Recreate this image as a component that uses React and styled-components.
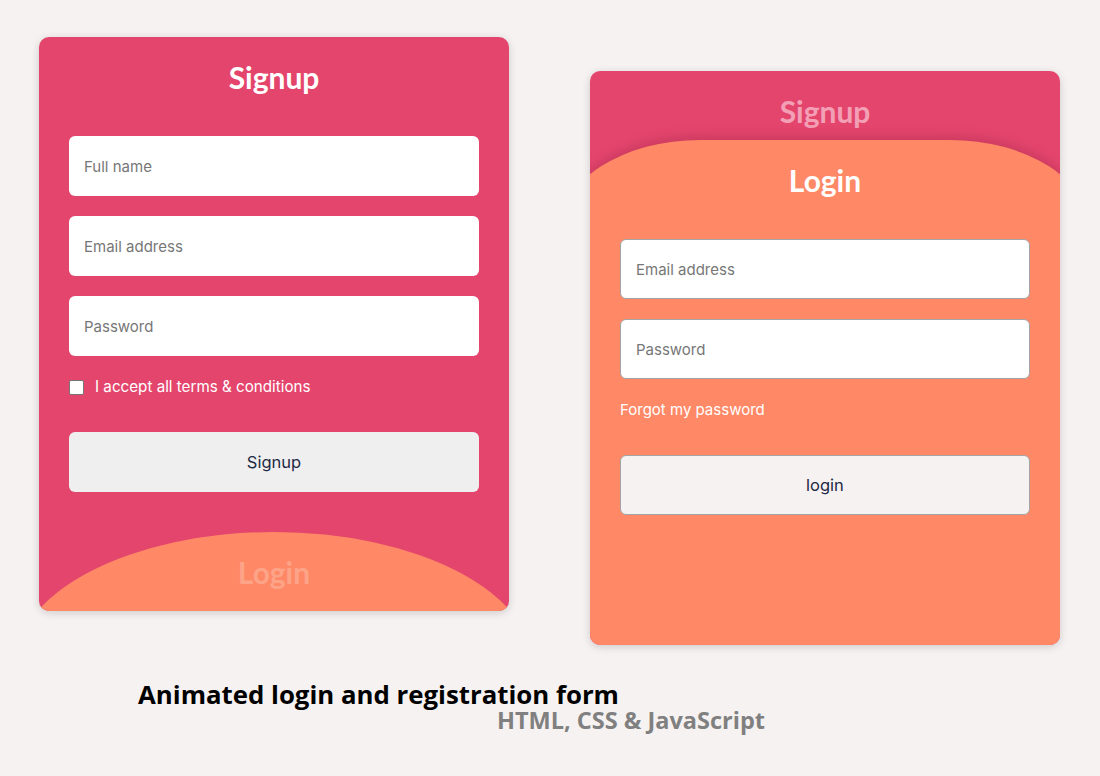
import React from "react"
import styled, { createGlobalStyle } from "styled-components"

const PINK = "#e4456d"
const ORANGE = "#ff8866"
const BODY_FONT = `Inter, "Noto Sans", sans-serif`

const GlobalStyle = createGlobalStyle`
  * { box-sizing: border-box; }
  body {
    margin: 0;
    background: #f6f2f1;
    font-family: ${BODY_FONT};
  }
`

const Page = styled.div`
  width: 1100px;
  height: 776px;
  display: flex;
  flex-direction: column;
`

const Row = styled.div`
  display: flex;
  align-items: flex-start;
  gap: 81px;
  padding: 37px 0 0 39px;
`

const Card = styled.div`
  position: relative;
  width: 470px;
  height: 574px;
  margin-top: ${p => p.$offset || 0}px;
  display: flex;
  flex-direction: column;
  background: ${PINK};
  border-radius: 10px;
  overflow: hidden;
  box-shadow: 0 2px 8px rgba(0, 0, 0, 0.16);
`

const Pane = styled.div`
  position: relative;
  display: flex;
  flex-direction: column;
  padding: 22px 30px 0;
  flex: ${p => (p.$grow ? 1 : "none")};
  height: ${p => (p.$height ? `${p.$height}px` : "auto")};
  margin-top: ${p => (p.$bottom ? "auto" : 0)};
`

const Ellipse = styled.div`
  position: absolute;
  left: 50%;
  top: 0;
  width: 520px;
  height: 270px;
  transform: translateX(-50%);
  border-radius: 50%;
  background: ${ORANGE};
`

const Hill = styled.div`
  position: absolute;
  left: -30px;
  right: -30px;
  top: 0;
  bottom: 0;
  background: ${ORANGE};
  border-radius: 140px 140px 0 0 / 90px 90px 0 0;
  box-shadow: 0 -3px 12px rgba(120, 20, 50, 0.25);
`

const Title = styled.h2`
  position: relative;
  margin: 0;
  height: 36px;
  line-height: 36px;
  text-align: center;
  font-family: Lato, "Noto Sans", sans-serif;
  font-size: 30px;
  font-weight: 700;
  color: ${p => p.$ghost || "#fff"};
`

const Fields = styled.div`
  position: relative;
  display: flex;
  flex-direction: column;
  gap: 20px;
  margin-top: 41px;
`

const Input = styled.input`
  width: 100%;
  height: 60px;
  padding: 0 15px;
  border: ${p => (p.$outlined ? "1px solid #a4a4a4" : "none")};
  border-radius: 6px;
  background: #fff;
  font-family: ${BODY_FONT};
  font-size: 15px;
  outline: none;
  &::placeholder {
    color: #777;
  }
`

const CheckRow = styled.label`
  display: flex;
  align-items: center;
  gap: 11px;
  height: 16px;
  margin-top: 23px;
  color: #fff;
  font-size: 15.2px;
  line-height: 16px;
`

const Box = styled.input`
  appearance: none;
  margin: 0;
  width: 15px;
  height: 15px;
  background: #fff;
  border: 1px solid #777;
  border-radius: 2px;
`

const Forgot = styled.div`
  position: relative;
  margin-top: 21px;
  height: 20px;
  line-height: 20px;
  color: #fff;
  font-size: 15px;
`

const Button = styled.button`
  position: relative;
  width: 100%;
  height: 60px;
  margin-top: ${p => p.$gap}px;
  border: ${p => (p.$outlined ? "1px solid #a4a4a4" : "none")};
  border-radius: 6px;
  background: ${p => (p.$outlined ? "#f6f2f1" : "#efefef")};
  color: #1e2a44;
  font-family: ${BODY_FONT};
  font-size: 16.5px;
`

const Caption = styled.div`
  margin: 36px 0 0 138px;
  font-family: "Open Sans", "Noto Sans", sans-serif;
  font-weight: 700;
`

const Heading = styled.div`
  font-size: 25.8px;
  line-height: 26px;
  color: #000;
`

const Sub = styled.div`
  padding-left: 359px;
  font-size: 23.5px;
  line-height: 26px;
  color: #808080;
`

export default function App() {
  return (
    <Page>
      <GlobalStyle />
      <Row>
        <Card>
          <Pane>
            <Title>Signup</Title>
            <Fields>
              <Input placeholder="Full name" />
              <Input placeholder="Email address" />
              <Input placeholder="Password" type="password" />
            </Fields>
            <CheckRow>
              <Box type="checkbox" />
              I accept all terms &amp; conditions
            </CheckRow>
            <Button $gap={37}>Signup</Button>
          </Pane>
          <Pane $bottom $height={79}>
            <Ellipse />
            <Title $ghost="#fda488">Login</Title>
          </Pane>
        </Card>

        <Card $offset={34}>
          <Pane $height={69}>
            <Title $ghost="#f3a0b6">Signup</Title>
          </Pane>
          <Pane $grow>
            <Hill />
            <Title>Login</Title>
            <Fields>
              <Input $outlined placeholder="Email address" />
              <Input $outlined placeholder="Password" type="password" />
            </Fields>
            <Forgot>Forgot my password</Forgot>
            <Button $outlined $gap={35}>login</Button>
          </Pane>
        </Card>
      </Row>
      <Caption>
        <Heading>Animated login and registration form</Heading>
        <Sub>HTML, CSS &amp; JavaScript</Sub>
      </Caption>
    </Page>
  )
}
